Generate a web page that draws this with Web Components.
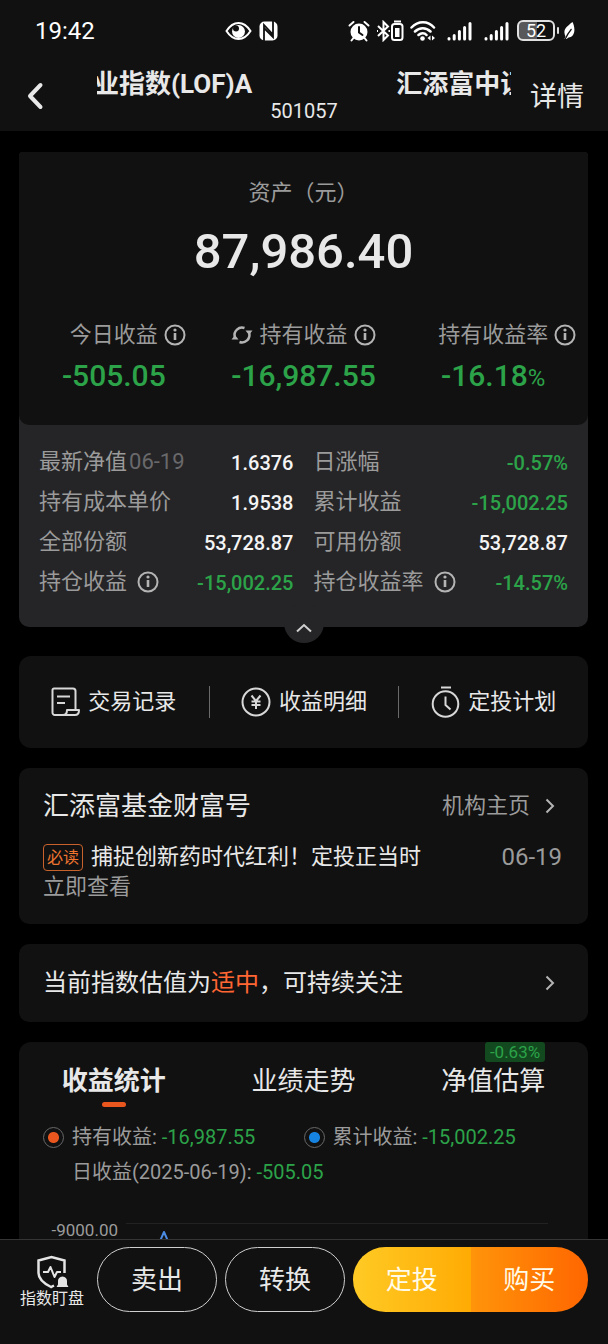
<!DOCTYPE html>
<html lang="zh-CN">
<head>
<meta charset="utf-8">
<meta name="viewport" content="width=device-width, initial-scale=1">
<title>汇添富中证 501057</title>
<style>
  :root {
    --surface: #111111;
    --surface-raised: #252527;
    --text: #e8e8e8;
    --muted: #9b9b9b;
    --dim: #69696b;
    --down: #2ca349;
    --accent: #e9571f;
  }

  body {
    margin: 0;
    background: #000;
    color: var(--text);
    font-family: Roboto, "Noto Sans CJK SC", sans-serif;
    font-size: 22px;
    line-height: 30px;
  }
</style>
</head>
<body>
<fund-app></fund-app>

<script>
const BASE = `
  * { box-sizing: border-box; }
  svg { display: block; flex: none; }
  button {
    margin: 0;
    padding: 0;
    border: 0;
    background: none;
    color: inherit;
    font: inherit;
    cursor: pointer;
  }
  a { color: inherit; text-decoration: none; }
`;

function define(name, css, html) {
  customElements.define(name, class extends HTMLElement {
    constructor() {
      super();
      const root = this.attachShadow({ mode: 'open' });
      root.innerHTML = `<style>${BASE}${css}</style>${typeof html === 'function' ? html(this) : html}`;
    }
  });
}

const signal = `
  <svg width="25" height="20" viewBox="0 0 25 20" fill="none" stroke="#fff" stroke-width="3" stroke-linecap="round">
    <path d="M2 17.500v.5M7.200 14.500V18M12.400 10.500V18M17.600 6.500V18M23 2.500V18"/>
  </svg>`;

define('status-bar', `
  :host {
    display: flex;
    align-items: center;
    height: 61px;
    padding: 0 33px 0 35px;
    color: #fff;
  }
  time { font-size: 24px; flex: 1; }
  .group { display: flex; align-items: center; }
  .left { gap: 7px; margin-right: 70px; }
  .right { gap: 6px; }
  .signals { display: flex; gap: 12px; margin: 0 2px 0 5px; }
  .battery {
    display: grid;
    place-items: center;
    width: 38px;
    height: 21px;
    border: 2px solid #e0e0e0;
    border-radius: 6px;
    background: linear-gradient(90deg, #58585a 52%, transparent 52%);
    font-size: 18px;
    line-height: 18px;
  }
  .plug { width: 2px; height: 7px; margin: 0 -2px 0 -4px; border-radius: 1px; background: #e0e0e0; }
`, `
  <time>19:42</time>
  <div class="group left">
    <svg width="27" height="20" viewBox="0 0 27 20">
      <path d="M1.500 10C5 4.500 9 2 13.500 2S22 4.500 25.500 10C22 15.500 18 18 13.500 18S5 15.500 1.500 10Z" fill="none" stroke="#fff" stroke-width="2"/>
      <circle cx="13.500" cy="10.500" r="6.500" fill="#fff"/>
      <circle cx="11" cy="7.500" r="3" fill="#111"/>
    </svg>
    <svg width="19" height="20" viewBox="0 0 19 20">
      <rect x=".5" y=".5" width="18" height="19" rx="5" fill="#fff"/>
      <path d="M5 20V4l9 9.500M14 0v16L5 7" fill="none" stroke="#111" stroke-width="1.800"/>
    </svg>
  </div>
  <div class="group right">
    <svg width="22" height="22" viewBox="0 0 22 22" fill="none" stroke="#fff" stroke-linecap="round">
      <circle cx="11" cy="12" r="8.500" fill="#fff" stroke="none"/>
      <path d="M1.500 5.500 5.500 2M20.500 5.500 16.500 2M5.500 18l-2 2.500M16.500 18l2 2.500" stroke-width="2"/>
      <path d="M11 7v5.500l3.500 2.500" stroke="#111" stroke-width="2"/>
    </svg>
    <div class="group">
      <svg width="15" height="22" viewBox="0 0 15 22" fill="none" stroke="#fff" stroke-width="2">
        <path d="M2 6l10 9.500-4.500 4.500V2L12 6.500 2 16"/>
        <path d="M1 11h1M12.500 11h1.500"/>
      </svg>
      <svg width="13" height="22" viewBox="0 0 13 22">
        <path d="M3 1.500h7" stroke="#fff" stroke-width="2"/>
        <rect x="1" y="4" width="10.500" height="16" rx="2.500" fill="none" stroke="#fff" stroke-width="2"/>
        <rect x="4" y="8" width="4.500" height="9" fill="#fff"/>
      </svg>
    </div>
    <svg width="26" height="22" viewBox="0 0 26 22" fill="none" stroke="#fff" stroke-width="2.500" stroke-linecap="round">
      <path d="M1.500 7.500C8 .5 18 .5 24 7.500M5 11.500c4.500-4.500 11-4.500 15.500 0M8.500 15c2.500-2.500 6-2.500 8 0"/>
      <circle cx="12.500" cy="18.500" r="2.300" fill="#fff" stroke="none"/>
      <path d="M20.500 15.500v5l-3-2.500zM22 15.500v5l3-2.500z" fill="#fff" stroke="none"/>
    </svg>
    <div class="signals">${signal}${signal}</div>
    <div class="battery">52</div>
    <span class="plug"></span>
    <svg width="12" height="18" viewBox="0 0 12 18">
      <path d="M9.500 0c3 6 3 15-4 15.500L3.500 17H1.500l1-2.500C-.5 8 3 5 9.500 0Z" fill="#fff"/>
      <path d="M2 17.500C4 13 6 10 8.500 7" fill="none" stroke="#111" stroke-width="1.200"/>
    </svg>
  </div>
`);

define('title-bar', `
  :host { display: flex; height: 70px; padding: 0 24px; }
  .back { width: 73px; }
  .heading { flex: 1; min-width: 0; text-align: center; }
  .marquee {
    display: flex;
    gap: 144px;
    height: 34px;
    margin: 6px 0 0;
    overflow: hidden;
    white-space: nowrap;
    font-size: 26px;
    font-weight: 700;
    line-height: 34px;
  }
  .marquee span:first-child { margin-left: -4px; }
  .code { margin: 0; font-size: 20px; line-height: 20px; }
  .detail { padding: 2px 0 0 19px; font-size: 27px; }
`, `
  <button class="back" aria-label="返回">
    <svg width="24" height="30" viewBox="0 0 24 30" fill="none" stroke="#e8e8e8" stroke-width="4" stroke-linecap="round" stroke-linejoin="round"><path d="M16.500 4 6 15l10.500 11"/></svg>
  </button>
  <div class="heading">
    <h1 class="marquee"><span>业指数(LOF)A</span><span>汇添富中证</span></h1>
    <p class="code">501057</p>
  </div>
  <button class="detail">详情</button>
`);

define('info-icon', `
  :host { display: inline-block; color: #b4b4b4; }
`, `
  <svg width="22" height="22" viewBox="0 0 22 22" fill="none" stroke="currentColor" stroke-width="2">
    <circle cx="11" cy="11" r="9.500"/>
    <path d="M11 9v7" stroke-width="2.600"/>
    <circle cx="11" cy="6" r="1.600" fill="currentColor" stroke="none"/>
  </svg>
`);

define('chevron-icon', `
  :host { display: block; color: #b4b4b4; }
`, `
  <svg width="24" height="24" viewBox="0 0 24 24" fill="none" stroke="currentColor" stroke-width="2"><path d="M8.500 5.500 15 12l-6.500 6.500"/></svg>
`);

// The icons sit in the side cells so that the label stays centred over its number.
define('profit-figure', `
  :host { display: block; text-align: center; }
  .label {
    display: grid;
    grid-template-columns: 1fr auto 1fr;
    align-items: center;
    gap: 6px;
    color: var(--muted);
    white-space: nowrap;
  }
  .before { justify-self: end; }
  .after { justify-self: start; display: flex; }
  .value {
    margin-top: 8px;
    color: var(--down);
    font-size: 30px;
    font-weight: 500;
    line-height: 36px;
  }
`, `
  <div class="label">
    <span class="before"><slot name="icon"></slot></span>
    <slot name="label"></slot>
    <span class="after"><info-icon></info-icon></span>
  </div>
  <div class="value"><slot></slot></div>
`);

define('asset-summary', `
  :host {
    display: block;
    padding: 26px 0 29px;
    border-radius: 4px 4px 10px 10px;
    background: var(--surface);
    text-align: center;
  }
  p { margin: 0; color: var(--muted); }
  strong { display: block; margin-top: 14px; font-size: 49px; font-weight: 500; line-height: 60px; }
  .figures { display: grid; grid-template-columns: repeat(3, 1fr); margin-top: 38px; }
  .percent { font-size: 24px; font-weight: 400; }
`, `
  <p>资产（元）</p>
  <strong>87,986.40</strong>
  <div class="figures">
    <profit-figure><span slot="label">今日收益</span>-505.05</profit-figure>
    <profit-figure>
      <svg slot="icon" width="22" height="22" viewBox="0 0 22 22" fill="none" stroke="#b4b4b4" stroke-width="2.500">
        <path d="M3.800 13A7.500 7.500 0 0 1 13.500 4M18.200 9A7.500 7.500 0 0 1 8.500 18"/>
        <path d="M14.500 6.500H21.500l-3.500 4.500zM7.500 15.500H.5L4 11z" fill="#b4b4b4" stroke="none"/>
      </svg>
      <span slot="label">持有收益</span>-16,987.55
    </profit-figure>
    <profit-figure><span slot="label">持有收益率</span>-16.18<span class="percent">%</span></profit-figure>
  </div>
`);

define('metric-row', `
  :host {
    display: flex;
    align-items: center;
    justify-content: space-between;
    height: 40px;
    white-space: nowrap;
  }
  .label { display: flex; align-items: center; gap: 10px; color: var(--muted); }
  .value { padding-top: 2px; font-size: 20px; font-weight: 500; }
  :host([down]) .value { color: var(--down); }
`, el => `
  <span class="label"><slot name="label"></slot>${el.hasAttribute('info') ? '<info-icon></info-icon>' : ''}</span>
  <span class="value"><slot></slot></span>
`);

define('holding-details', `
  :host {
    display: block;
    position: relative;
    padding: 17px 20px 25px;
    color: #f4f4f4;
  }
  .rows { display: grid; grid-template-columns: 1fr 1fr; column-gap: 20px; }
  .date { margin-left: 2px; color: var(--dim); }
  .fold {
    position: absolute;
    left: 50%;
    bottom: -16px;
    width: 40px;
    height: 40px;
    padding-top: 10px;
    transform: translateX(-50%);
    border-radius: 50%;
    background: var(--surface-raised);
  }
  .fold svg { margin: 0 auto; }
`, `
  <div class="rows">
    <metric-row><span slot="label">最新净值<span class="date">06-19</span></span>1.6376</metric-row>
    <metric-row down><span slot="label">日涨幅</span>-0.57%</metric-row>
    <metric-row><span slot="label">持有成本单价</span>1.9538</metric-row>
    <metric-row down><span slot="label">累计收益</span>-15,002.25</metric-row>
    <metric-row><span slot="label">全部份额</span>53,728.87</metric-row>
    <metric-row><span slot="label">可用份额</span>53,728.87</metric-row>
    <metric-row down info><span slot="label">持仓收益</span>-15,002.25</metric-row>
    <metric-row down info><span slot="label">持仓收益率</span>-14.57%</metric-row>
  </div>
  <button class="fold" aria-label="收起">
    <svg width="18" height="20" viewBox="0 0 18 20" fill="none" stroke="#d0d0d0" stroke-width="2"><path d="M2 13.500 9 7l7 6.500"/></svg>
  </button>
`);

define('quick-actions', `
  :host {
    display: grid;
    grid-template-columns: repeat(3, 1fr);
    align-items: center;
    padding: 30px 0;
    border-radius: 12px;
    background: var(--surface);
  }
  button {
    display: flex;
    align-items: center;
    justify-content: center;
    gap: 8px;
    height: 32px;
    white-space: nowrap;
  }
  button + button { border-left: 1px solid #6a6a6a; }
  svg { fill: none; stroke: #d8d8d8; stroke-width: 2; stroke-linejoin: round; }
`, `
  <button>
    <svg width="29" height="30" viewBox="0 0 29 30">
      <path d="M24.500 23V4a2.500 2.500 0 0 0-2.500-2.500H3A1.500 1.500 0 0 0 1.500 3v22A2.500 2.500 0 0 0 4 28h20c2.500 0 4-2 4-5H16c0 3-1.500 5-4 5M6 9.500h13M6 16h8"/>
    </svg>
    交易记录
  </button>
  <button>
    <svg width="30" height="30" viewBox="0 0 30 30">
      <circle cx="15" cy="15" r="13.500"/>
      <path d="M10.500 8.500 15 14l4.500-5.500M15 14v8M10.500 14.500h9M10.500 18h9"/>
    </svg>
    收益明细
  </button>
  <button>
    <svg width="29" height="32" viewBox="0 0 29 32">
      <circle cx="14.500" cy="18" r="12.800"/>
      <path d="M10 1.500h10M14.500 10.500V19l5 4.500"/>
    </svg>
    定投计划
  </button>
`);

define('fortune-card', `
  :host {
    display: block;
    padding: 20px 26px 22px 24px;
    border-radius: 10px;
    background: var(--surface);
  }
  header, .entry { display: flex; align-items: center; justify-content: space-between; }
  h2 { margin: 0; font-size: 26px; font-weight: 400; line-height: 36px; }
  .home { display: flex; align-items: center; gap: 8px; color: var(--muted); }
  .entry { margin-top: 18px; white-space: nowrap; }
  .headline { display: flex; align-items: center; gap: 8px; }
  .tag {
    width: 40px;
    border: 1px solid #c8622c;
    border-radius: 4px;
    color: #ee7430;
    font-size: 16px;
    line-height: 25px;
    text-align: center;
  }
  time { color: var(--muted); font-size: 24px; }
  .more { display: block; color: var(--muted); }
`, `
  <header>
    <h2>汇添富基金财富号</h2>
    <a class="home" href="#home">机构主页<chevron-icon></chevron-icon></a>
  </header>
  <a class="entry" href="#article">
    <span class="headline"><span class="tag">必读</span>捕捉创新药时代红利！定投正当时</span>
    <time>06-19</time>
  </a>
  <a class="more" href="#article">立即查看</a>
`);

define('valuation-link', `
  :host { display: block; }
  a {
    display: flex;
    align-items: center;
    justify-content: space-between;
    padding: 21px 26px 21px 24px;
    border-radius: 10px;
    background: var(--surface);
    font-size: 24px;
    line-height: 36px;
  }
  em { color: #ff6633; font-style: normal; }
`, `
  <a href="#valuation"><span>当前指数估值为<em>适中</em>，可持续关注</span><chevron-icon></chevron-icon></a>
`);

define('profit-stats', `
  :host {
    display: block;
    border-radius: 12px 12px 0 0;
    background: var(--surface);
  }
  nav { display: grid; grid-template-columns: repeat(3, 1fr); padding-top: 20px; }
  nav button {
    display: flex;
    flex-direction: column;
    align-items: center;
    justify-self: center;
    position: relative;
    height: 45px;
    font-size: 26px;
    line-height: 38px;
  }
  nav button span { height: 40px; }
  .active { font-weight: 700; }
  .active::after {
    content: "";
    width: 24px;
    height: 5px;
    border-radius: 3px;
    background: var(--accent);
  }
  .badge {
    position: absolute;
    right: 0;
    bottom: 100%;
    padding: 0 5px;
    border-radius: 3px;
    background: #12491f;
    color: var(--down);
    font-size: 17px;
    line-height: 20px;
  }
  .legend { display: grid; grid-template-columns: 1fr 1fr; padding: 15px 24px 0; }
  label, .today { color: var(--muted); font-size: 20px; white-space: nowrap; }
  label { display: flex; align-items: center; gap: 8px; }
  input {
    appearance: none;
    width: 21px;
    height: 21px;
    margin: 0;
    border: 1px solid #68686a;
    border-radius: 50%;
  }
  input:checked { background: radial-gradient(circle, var(--dot) 5px, transparent 6px); }
  .holding { --dot: #e9571f; }
  .total { --dot: #1683e0; }
  .value { color: var(--down); }
  .today { margin: 5px 0 0; padding-left: 53px; }
  .chart { display: grid; grid-template-columns: 74px 1fr; gap: 8px; padding: 36px 40px 0 25px; height: 160px; }
  .axis { color: var(--muted); font-size: 17px; line-height: 14px; text-align: right; }
  .plot { border-top: 1px solid #222; }
`, `
  <nav>
    <button class="active"><span>收益统计</span></button>
    <button><span>业绩走势</span></button>
    <button><span>净值估算</span><small class="badge">-0.63%</small></button>
  </nav>
  <div class="legend">
    <label class="holding"><input type="checkbox" checked><span>持有收益: <span class="value">-16,987.55</span></span></label>
    <label class="total"><input type="checkbox" checked><span>累计收益: <span class="value">-15,002.25</span></span></label>
  </div>
  <p class="today">日收益(2025-06-19): <span class="value">-505.05</span></p>
  <div class="chart">
    <div class="axis">-9000.00</div>
    <div class="plot">
      <svg width="80" height="60" viewBox="0 0 80 60" fill="none" stroke="#4a8ae0" stroke-width="2" stroke-linejoin="round">
        <path d="M24 40 38 8 52 40 60 50"/>
      </svg>
    </div>
  </div>
`);

define('trade-bar', `
  :host {
    display: flex;
    align-items: center;
    gap: 8px;
    padding: 7px 20px 32px 15px;
    border-top: 1px solid #353535;
    background: var(--surface);
    font-size: 26px;
  }
  .watch { width: 74px; padding-top: 4px; font-size: 16px; line-height: 20px; white-space: nowrap; }
  .watch svg { margin: 0 auto; }
  .pill { flex: 118; height: 65px; border: 1px solid #cfcfcf; border-radius: 33px; }
  .split { flex: 235; display: flex; height: 65px; border-radius: 33px; overflow: hidden; color: #fffbe8; }
  .split button { flex: 1; }
  .plan { background: linear-gradient(90deg, #ffca24, #ffab04); }
  .buy { background: linear-gradient(90deg, #ff940a, #ff6600); }
`, `
  <button class="watch">
    <svg width="36" height="34" viewBox="0 0 36 34" fill="none" stroke="#e4e4e4" stroke-width="3">
      <path d="M20 30.500l-3 1.500C9 28 4.500 24 4.500 18V5.500L17.500 2l13 3.500V18" stroke-width="2.500"/>
      <path d="M9 17h5l2.500-5 4 10 2.500-5h4" stroke-width="2" stroke-linejoin="round"/>
      <path d="M24 29.500V26c0-2.500 1.500-4 4.500-4.500 3 .5 4.500 2 4.500 4.500v3.500l1.500 2.500h-12z" fill="#e4e4e4" stroke="none"/>
    </svg>
    指数盯盘
  </button>
  <button class="pill">卖出</button>
  <button class="pill">转换</button>
  <div class="split">
    <button class="plan">定投</button>
    <button class="buy">购买</button>
  </div>
`);

define('fund-app', `
  :host { display: flex; flex-direction: column; height: 100vh; }
  .top { background: var(--surface); }
  main {
    flex: 1;
    min-height: 0;
    overflow: hidden;
    display: flex;
    flex-direction: column;
    gap: 20px;
    padding: 21px 20px 0 19px;
  }
  main > * { flex: none; }
  .asset { margin-bottom: 9px; border-radius: 4px 4px 10px 10px; background: var(--surface-raised); }
`, `
  <div class="top">
    <status-bar></status-bar>
    <title-bar></title-bar>
  </div>
  <main>
    <section class="asset">
      <asset-summary></asset-summary>
      <holding-details></holding-details>
    </section>
    <quick-actions></quick-actions>
    <fortune-card></fortune-card>
    <valuation-link></valuation-link>
    <profit-stats></profit-stats>
  </main>
  <trade-bar></trade-bar>
`);
</script>
</body>
</html>
